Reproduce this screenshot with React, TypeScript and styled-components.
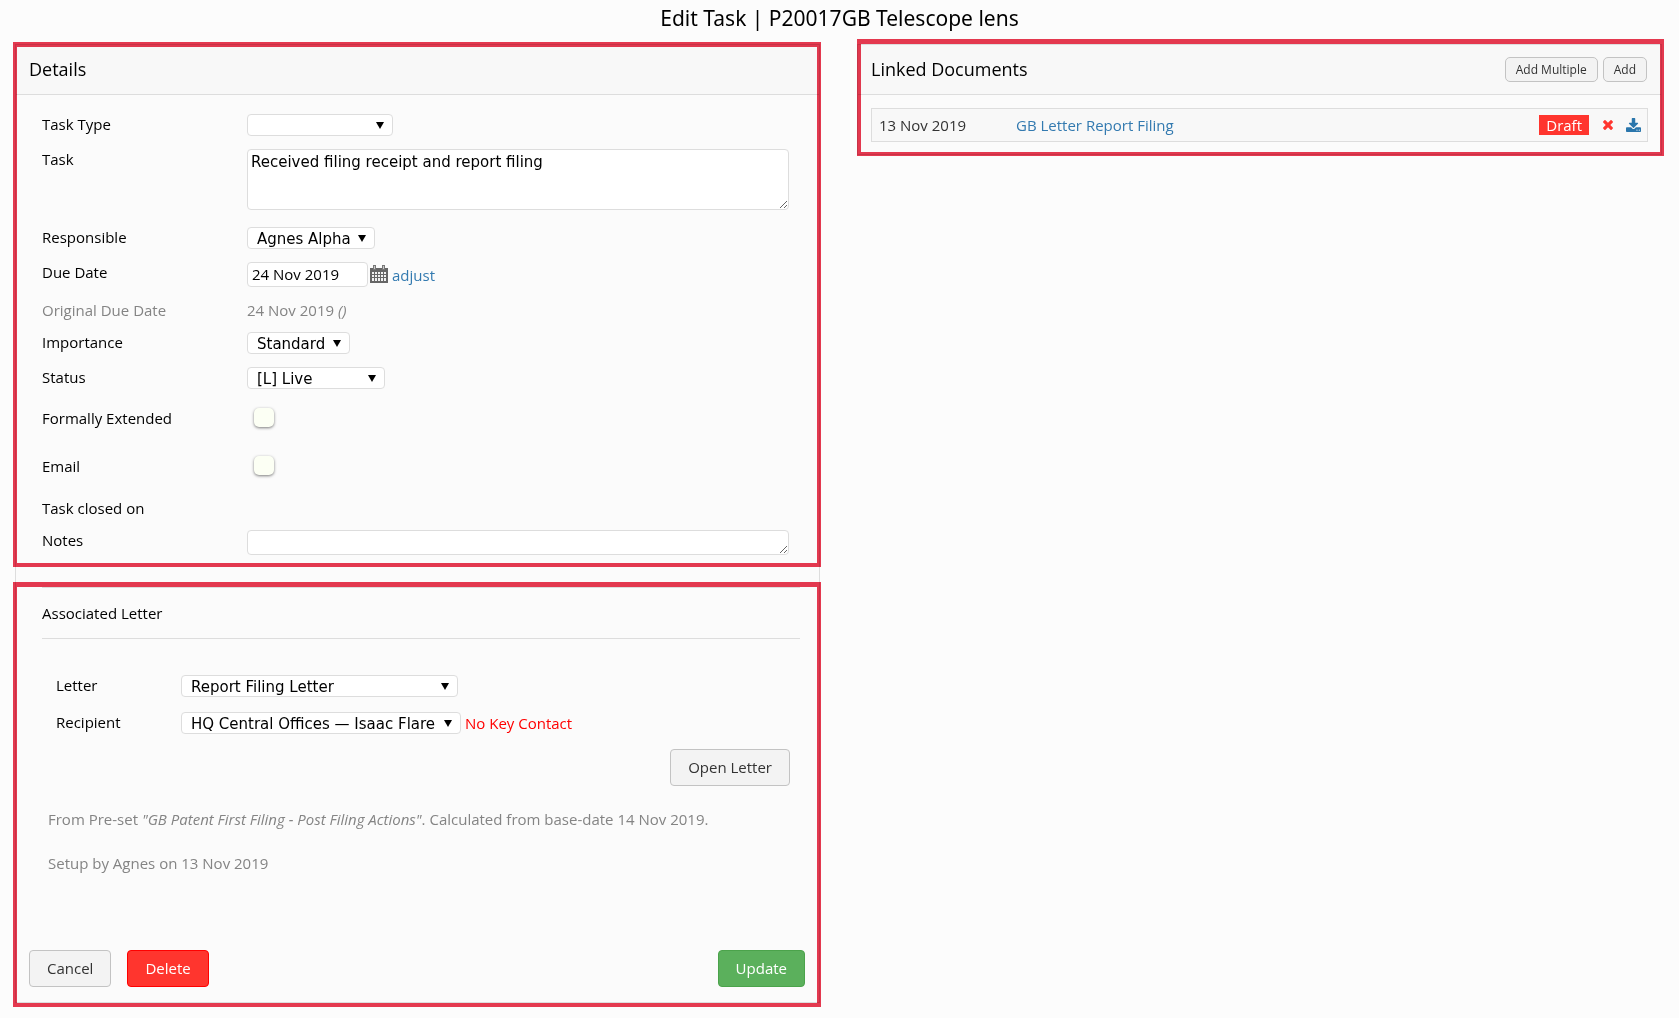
import React, { useId, useState } from "react";
import styled, { createGlobalStyle, css } from "styled-components";

const uiFont = `"Open Sans", "Noto Sans", sans-serif`;
const fieldFont = `"DejaVu Sans", "Noto Sans", sans-serif`;

const line = "#dddddd";
const mark = "#e73950";

const GlobalStyle = createGlobalStyle`
  *, *::before, *::after { box-sizing: border-box; }
  body {
    margin: 0;
    background: #fcfcfc;
    color: #000000;
    font: 15px/22px ${uiFont};
  }
  h1, h2, h3, p { margin: 0; font-weight: 400; }
`;

const Title = styled.h1`
  height: 44px;
  padding-top: 4px;
  font: 400 21px/28px "Noto Sans", sans-serif;
  text-align: center;
`;

const Columns = styled.main`
  display: grid;
  grid-template-columns: 1fr 1fr;
  align-items: start;
  gap: 37px;
  padding: 0 17px 11px 15px;
`;

const Card = styled.div`
  border: 1px solid ${line};
  background: #fbfbfb;
`;

/* A card section with a red marker frame drawn over its edges. */
const Marked = styled.section<{ $inset: string }>`
  display: flow-root;
  position: relative;

  &::after {
    content: "";
    position: absolute;
    inset: ${(p) => p.$inset};
    border: 4px solid ${mark};
    border-top-width: 5px;
    mix-blend-mode: multiply;
    pointer-events: none;
  }
`;

const CardHeader = styled.header`
  display: flex;
  align-items: center;
  gap: 5px;
  height: 50px;
  padding: 0 14px 0 13px;
  border-bottom: 1px solid ${line};
  background: #f8f8f8;
`;

const CardTitle = styled.h2`
  flex: 1;
  padding-bottom: 2px;
  font-size: 18px;
  line-height: 24px;
`;

const Fields = styled.div`
  padding: 19px 30px 8px 26px;
`;

const Field = styled.div<{ $height: number; $top?: number }>`
  display: grid;
  grid-template-columns: 205px 1fr;
  align-items: start;
  min-height: ${(p) => p.$height}px;
  padding-top: ${(p) => p.$top ?? 0}px;
  line-height: 20px;
`;

const FieldLabel = styled.label`
  line-height: 20px;
`;

const Muted = styled.span`
  color: #848484;
`;

const Inline = styled.div`
  display: flex;
  align-items: center;
`;

const controlBox = css`
  border: 1px solid ${line};
  border-radius: 4px;
  background: #ffffff;
  color: #000000;
  outline: none;
`;

const SelectWrap = styled.span<{ $width: number }>`
  position: relative;
  display: block;
  width: ${(p) => p.$width}px;

  &::after {
    content: "";
    position: absolute;
    top: 8px;
    right: 9px;
    border: solid transparent;
    border-width: 7px 4px 0;
    border-top-color: #000000;
    pointer-events: none;
  }
`;

const Select = styled.select`
  ${controlBox}
  appearance: none;
  display: block;
  width: 100%;
  height: 22px;
  padding: 2px 0 0 9px;
  font: 15px/18px ${fieldFont};
`;

const TextArea = styled.textarea<{ $height: number }>`
  ${controlBox}
  display: block;
  width: 100%;
  height: ${(p) => p.$height}px;
  padding: 2px 3px;
  overflow: hidden;
  resize: both;
  font: 15px/20px ${fieldFont};
`;

const DateInput = styled.input`
  ${controlBox}
  width: 121px;
  height: 25px;
  padding: 0 4px 2px;
  font: 15px/20px ${uiFont};
`;

const IconButton = styled.button`
  display: flex;
  padding: 0;
  border: 0;
  background: none;
  color: inherit;
  cursor: pointer;
`;

const CalendarButton = styled(IconButton)`
  margin: 0 4px 0 2px;
  padding-bottom: 2px;
`;

const Link = styled.a`
  color: #337ab0;
  line-height: 22px;
  text-decoration: none;
`;

const Check = styled.input`
  appearance: none;
  width: 20px;
  height: 19px;
  margin: 0 7px;
  border-radius: 5px;
  background: #fcfff4;
  box-shadow: 0 1px 3px rgba(0, 0, 0, 0.5);
`;

const Break = styled.div`
  height: 15px;
`;

const LetterBody = styled.div`
  display: flex;
  flex-direction: column;
  padding: 5px 19px 15px 26px;
`;

const LetterTitle = styled.h3`
  height: 52px;
  padding-top: 14px;
  border: solid ${line};
  border-width: 1px 0;
  font-size: 15px;
  line-height: 22px;
`;

const LetterFields = styled.div`
  display: grid;
  grid-template-columns: 125px 1fr;
  row-gap: 15px;
  padding: 36px 0 15px 14px;
`;

const Warning = styled.span`
  padding-left: 4px;
  color: #ff0000;
`;

const History = styled.div`
  display: grid;
  gap: 22px;
  padding: 22px 6px 0;
  color: #848484;
`;

const Actions = styled.footer`
  display: flex;
  gap: 16px;
  padding: 61px 14px 15px 13px;
`;

const tones = {
  plain: css`
    border-color: #c3c3c3;
    background: #f3f3f3;
    color: #333333;
  `,
  danger: css`
    border-color: #ff0000;
    background: #ff352e;
    color: #ffffff;
  `,
  success: css`
    border-color: #4ba34b;
    background: #5bb05c;
    color: #ffffff;
  `,
};

const Button = styled.button<{ $tone?: keyof typeof tones; $small?: boolean; $end?: boolean }>`
  ${(p) => tones[p.$tone ?? "plain"]}
  border-style: solid;
  border-width: 1px;
  border-radius: ${(p) => (p.$small ? 5 : 4)}px;
  height: ${(p) => (p.$small ? 25 : 37)}px;
  padding: ${(p) => (p.$small ? "0 10px" : "0 17px 2px")};
  font: ${(p) => (p.$small ? "12px/18px" : "15px/22px")} ${uiFont};
  white-space: nowrap;
  cursor: pointer;
  ${(p) => p.$end && "margin-left: auto; align-self: flex-end;"}
`;

const OpenLetter = styled(Button)`
  margin-right: 10px;
`;

const DocTable = styled.table`
  width: calc(100% - 26px);
  margin: 13px 13px 12px;
  border: 1px solid ${line};
  border-spacing: 0;
  background: #f8f8f8;
  color: #333333;

  td {
    height: 32px;
    padding: 0 6px 0 7px;
  }
  td:first-child {
    width: 137px;
  }
`;

const DocTools = styled.div`
  display: flex;
  align-items: center;
  justify-content: flex-end;
`;

const Badge = styled.span`
  margin-right: 14px;
  padding: 0 7px;
  background: #ff352e;
  color: #ffffff;
  line-height: 20px;
`;

const DeleteDoc = styled(IconButton)`
  margin-right: 13px;
  color: #ff352e;
`;

const DownloadDoc = styled(IconButton)`
  color: #2a76ac;
`;

function CalendarIcon() {
  return (
    <svg width="18" height="18" viewBox="0 0 18 18" aria-hidden="true">
      <path fill="#666666" d="M0 3h18v15H0z" />
      <path fill="#777777" d="M3 0h3v5H3zM12 0h3v5h-3z" />
      <path fill="#c9c9c9" d="M4 1h1v3H4zM13 1h1v3h-1z" />
      <path
        fill="#f1f1f1"
        d="M2 7h2v2H2zM5 7h2v2H5zM8 7h2v2H8zM11 7h2v2h-2zM14 7h2v2h-2zM2 10h2v2H2zM5 10h2v2H5zM8 10h2v2H8zM11 10h2v2h-2zM14 10h2v2h-2zM2 13h2v3H2zM5 13h2v3H5zM8 13h2v3H8zM11 13h2v3h-2zM14 13h2v3h-2z"
      />
    </svg>
  );
}

function CrossIcon() {
  return (
    <svg width="10" height="10" viewBox="110 366 1188 1188" fill="currentColor" aria-hidden="true">
      <path d="M1298 1322q0 40-28 68l-136 136q-28 28-68 28t-68-28l-294-294-294 294q-28 28-68 28t-68-28l-136-136q-28-28-28-68t28-68l294-294-294-294q-28-28-28-68t28-68l136-136q28-28 68-28t68 28l294 294 294-294q28-28 68-28t68 28l136 136q28 28 28 68t-28 68l-294 294 294 294q28 28 28 68z" />
    </svg>
  );
}

function DownloadIcon() {
  return (
    <svg width="15" height="14" viewBox="0 0 1664 1536" fill="currentColor" aria-hidden="true">
      <path d="M1280 1344q0-26-19-45t-45-19-45 19-19 45 19 45 45 19 45-19 19-45zm256 0q0-26-19-45t-45-19-45 19-19 45 19 45 45 19 45-19 19-45zm128-224v320q0 40-28 68t-68 28h-1472q-40 0-68-28t-28-68v-320q0-40 28-68t68-28h465l135 136q58 56 136 56t136-56l136-136h464q40 0 68 28t28 68zm-325-569q17 41-14 70l-448 448q-18 19-45 19t-45-19l-448-448q-31-29-14-70 17-39 59-39h256v-448q0-26 19-45t45-19h256q26 0 45 19t19 45v448h256q42 0 59 39z" />
    </svg>
  );
}

function Dropdown({ id, width, value }: { id: string; width: number; value: string }) {
  return (
    <SelectWrap $width={width}>
      <Select id={id} defaultValue={value}>
        <option>{value}</option>
      </Select>
    </SelectWrap>
  );
}

function SelectField(props: { label: string; width: number; value: string }) {
  const id = useId();
  return (
    <Field $height={35}>
      <FieldLabel htmlFor={id}>{props.label}</FieldLabel>
      <Dropdown id={id} width={props.width} value={props.value} />
    </Field>
  );
}

function CheckField({ label }: { label: string }) {
  const id = useId();
  return (
    <Field $height={48} $top={6}>
      <FieldLabel htmlFor={id}>{label}</FieldLabel>
      <Check id={id} type="checkbox" />
    </Field>
  );
}

function Details() {
  const [task, setTask] = useState("Received filing receipt and report filing");
  const [due, setDue] = useState("24 Nov 2019");
  return (
    <Marked $inset="-3px -2px 0 -3px">
      <CardHeader>
        <CardTitle>Details</CardTitle>
      </CardHeader>
      <Fields>
        <SelectField label="Task Type" width={146} value="" />
        <Field $height={78}>
          <FieldLabel htmlFor="task">Task</FieldLabel>
          <TextArea id="task" $height={61} value={task} onChange={(e) => setTask(e.target.value)} />
        </Field>
        <SelectField label="Responsible" width={128} value="Agnes Alpha" />
        <Field $height={38}>
          <FieldLabel htmlFor="due">Due Date</FieldLabel>
          <Inline>
            <DateInput id="due" value={due} onChange={(e) => setDue(e.target.value)} />
            <CalendarButton type="button" aria-label="Choose date">
              <CalendarIcon />
            </CalendarButton>
            <Link href="#adjust">adjust</Link>
          </Inline>
        </Field>
        <Field $height={32}>
          <Muted>Original Due Date</Muted>
          <Muted>
            24 Nov 2019 <i>()</i>
          </Muted>
        </Field>
        <SelectField label="Importance" width={103} value="Standard" />
        <SelectField label="Status" width={138} value="[L] Live" />
        <CheckField label="Formally Extended" />
        <CheckField label="Email" />
        <Field $height={32}>
          <span>Task closed on</span>
        </Field>
        <Field $height={29}>
          <FieldLabel htmlFor="notes">Notes</FieldLabel>
          <TextArea id="notes" $height={25} />
        </Field>
      </Fields>
    </Marked>
  );
}

function AssociatedLetter() {
  return (
    <Marked $inset="0 -2px -5px -3px">
      <LetterBody>
        <LetterTitle>Associated Letter</LetterTitle>
        <LetterFields>
          <FieldLabel htmlFor="letter">Letter</FieldLabel>
          <Dropdown id="letter" width={277} value="Report Filing Letter" />
          <FieldLabel htmlFor="recipient">Recipient</FieldLabel>
          <Inline>
            <Dropdown id="recipient" width={280} value="HQ Central Offices — Isaac Flare" />
            <Warning>No Key Contact</Warning>
          </Inline>
        </LetterFields>
        <OpenLetter type="button" $end>
          Open Letter
        </OpenLetter>
        <History>
          <p>
            From Pre-set <i>"GB Patent First Filing - Post Filing Actions"</i>. Calculated from
            base-date 14 Nov 2019.
          </p>
          <p>Setup by Agnes on 13 Nov 2019</p>
        </History>
      </LetterBody>
      <Actions>
        <Button type="button">Cancel</Button>
        <Button type="button" $tone="danger">
          Delete
        </Button>
        <Button type="button" $tone="success" $end>
          Update
        </Button>
      </Actions>
    </Marked>
  );
}

function LinkedDocuments() {
  return (
    <Marked $inset="-6px -3px -2px -1px">
      <CardHeader>
        <CardTitle>Linked Documents</CardTitle>
        <Button type="button" $small>
          Add Multiple
        </Button>
        <Button type="button" $small>
          Add
        </Button>
      </CardHeader>
      <DocTable>
        <tbody>
          <tr>
            <td>13 Nov 2019</td>
            <td>
              <Link href="#document">GB Letter Report Filing</Link>
            </td>
            <td>
              <DocTools>
                <Badge>Draft</Badge>
                <DeleteDoc type="button" aria-label="Delete document">
                  <CrossIcon />
                </DeleteDoc>
                <DownloadDoc type="button" aria-label="Download document">
                  <DownloadIcon />
                </DownloadDoc>
              </DocTools>
            </td>
          </tr>
        </tbody>
      </DocTable>
    </Marked>
  );
}

export default function App() {
  return (
    <>
      <GlobalStyle />
      <Title>Edit Task | P20017GB Telescope lens</Title>
      <Columns>
        <Card>
          <Details />
          <Break />
          <AssociatedLetter />
        </Card>
        <Card>
          <LinkedDocuments />
        </Card>
      </Columns>
    </>
  );
}
